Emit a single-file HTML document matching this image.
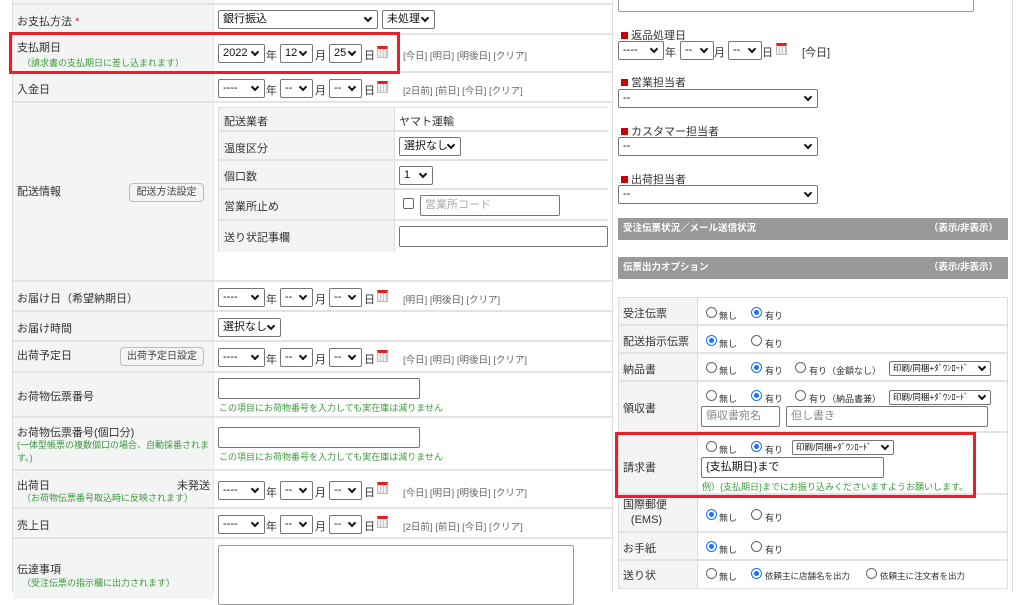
<!DOCTYPE html>
<html><head><meta charset="utf-8"><style>
*{box-sizing:border-box;margin:0;padding:0}
body{width:1024px;height:592px;overflow:hidden;background:#fff;position:relative;font-family:"Liberation Sans","Noto Sans CJK JP",sans-serif;font-size:11px;color:#333}
.a{position:absolute}
.lab{position:absolute;background:#f3f4f4;border-bottom:2px solid #e3e3e3}
.val{position:absolute;background:#fff;border-bottom:2px solid #e3e3e3}
.L{left:13px;width:200px}
.V{left:213px;width:399px}
.s{position:absolute;height:19px;border:1px solid #767676;border-radius:2px;background:#fff;font-size:11px;line-height:17px;padding-left:4px;color:#111;white-space:nowrap;overflow:hidden}
.s:after{content:"";position:absolute;right:6px;top:4px;width:4px;height:4px;border-right:2px solid #111;border-bottom:2px solid #111;transform:rotate(45deg)}
.t{position:absolute;font-size:11px;color:#333;white-space:nowrap}
.g{position:absolute;font-size:9px;color:#3c9a3c;white-space:nowrap}
.lk{position:absolute;font-size:9.5px;color:#666;white-space:nowrap}
.cal{position:absolute;width:11px;height:12px;border:1px solid #bbb;border-top:3px solid #d22;background:repeating-linear-gradient(90deg,#eee 0 2px,#ccc 2px 3px)}
.in{position:absolute;border:1px solid #767676;border-radius:2px;background:#fff;height:21px;font-size:11px;padding-left:4px;line-height:19px;color:#999;white-space:nowrap}
.btn{position:absolute;border:1px solid #bbb;border-radius:4px;background:#f4f4f4;font-size:10px;text-align:center;color:#444;line-height:17px;height:19px;white-space:nowrap;overflow:hidden}
.r{position:absolute;width:11px;height:11px;border:1px solid #666;border-radius:50%;background:#fff}
.rc{border:1px solid #1a73e8}
.rc:after{content:"";position:absolute;left:2px;top:2px;width:5px;height:5px;border-radius:50%;background:#1a73e8}
.rt{position:absolute;font-size:9px;color:#333;white-space:nowrap}
.sq{display:inline-block;width:7px;height:7px;background:#c00;margin-right:3px}
.bar{position:absolute;left:618px;width:390px;height:22px;background:#999;color:#fff;font-size:9.5px;font-weight:bold;line-height:22px;padding:0 10px 0 5px}
.bar span{float:right}
.ss{position:absolute;height:15px;border:1px solid #767676;border-radius:2px;background:#fff;font-size:8.5px;line-height:13px;padding-left:3px;color:#111;white-space:nowrap;overflow:hidden}
.ss:after{content:"";position:absolute;right:5px;top:2px;width:4px;height:4px;border-right:2px solid #111;border-bottom:2px solid #111;transform:rotate(45deg)}
</style></head><body>

<div class="a" style="left:12px;top:0;width:1px;height:592px;background:#ddd"></div>
<div class="a" style="left:612px;top:0;width:1px;height:592px;background:#ddd"></div>
<div class="a" style="left:1012px;top:0;width:1px;height:592px;background:#ddd"></div>

<div class="lab L" style="top:0;height:5px"></div><div class="val V" style="top:0;height:5px"></div>
<div class="a" style="left:213px;top:0;width:1px;height:592px;background:#e3e3e3;z-index:1"></div>

<div class="lab L" style="top:5px;height:30px"></div><div class="val V" style="top:5px;height:30px"></div>
<div class="t" style="left:17px;top:13px">お支払方法 <span style="color:#d22">*</span></div>
<div class="s" style="left:218px;top:10px;width:160px">銀行振込</div>
<div class="s" style="left:382px;top:10px;width:53px">未処理</div>

<div class="lab L" style="top:35px;height:38px"></div><div class="val V" style="top:35px;height:38px"></div>
<div class="t" style="left:17px;top:39px">支払期日</div>
<div class="g" style="left:22px;top:56px">（請求書の支払期日に差し込まれます）</div>
<div class="s" style="left:218px;top:44px;width:47px">2022</div><div class="t" style="left:266px;top:47px">年</div>
<div class="s" style="left:280px;top:44px;width:33px">12</div><div class="t" style="left:315px;top:47px">月</div>
<div class="s" style="left:329px;top:44px;width:33px">25</div><div class="t" style="left:364px;top:47px">日</div>
<div class="cal" style="left:377px;top:46px"></div>
<div class="lk" style="left:403px;top:48px">[今日] [明日] [明後日] [クリア]</div>
<div class="a" style="left:9px;top:32px;width:391px;height:42px;border:3px solid #e8202a;z-index:5"></div>

<div class="lab L" style="top:73px;height:30px"></div><div class="val V" style="top:73px;height:30px"></div>
<div class="t" style="left:17px;top:81px">入金日</div>
<div class="s" style="left:218px;top:79px;width:47px">----</div><div class="t" style="left:266px;top:82px">年</div>
<div class="s" style="left:280px;top:79px;width:33px">--</div><div class="t" style="left:315px;top:82px">月</div>
<div class="s" style="left:329px;top:79px;width:33px">--</div><div class="t" style="left:364px;top:82px">日</div>
<div class="cal" style="left:377px;top:81px"></div>
<div class="lk" style="left:403px;top:83px">[2日前] [前日] [今日] [クリア]</div>

<div class="lab L" style="top:103px;height:179px"></div><div class="val V" style="top:103px;height:179px"></div>
<div class="t" style="left:17px;top:183px">配送情報</div>
<div class="btn" style="left:129px;top:183px;width:75px">配送方法設定</div>
<div class="a" style="left:218px;top:107px;width:390px;height:145px;border:1px solid #ddd;border-right:none;background:#ddd"></div>
<div class="lab" style="left:219px;top:108px;width:175px;height:24px"></div><div class="val" style="left:395px;top:108px;width:213px;height:24px"></div>
<div class="lab" style="left:219px;top:132px;width:175px;height:29px"></div><div class="val" style="left:395px;top:132px;width:213px;height:29px"></div>
<div class="lab" style="left:219px;top:161px;width:175px;height:29px"></div><div class="val" style="left:395px;top:161px;width:213px;height:29px"></div>
<div class="lab" style="left:219px;top:190px;width:175px;height:31px"></div><div class="val" style="left:395px;top:190px;width:213px;height:31px"></div>
<div class="lab" style="left:219px;top:221px;width:175px;height:31px;border:none"></div><div class="val" style="left:395px;top:221px;width:213px;height:31px;border:none"></div>
<div class="t" style="left:224px;top:113px">配送業者</div><div class="t" style="left:399px;top:113px">ヤマト運輸</div>
<div class="t" style="left:224px;top:140px">温度区分</div><div class="s" style="left:399px;top:137px;width:62px">選択なし</div>
<div class="t" style="left:224px;top:168px">個口数</div><div class="s" style="left:399px;top:166px;width:34px">1</div>
<div class="t" style="left:224px;top:198px">営業所止め</div>
<div class="a" style="left:403px;top:198px;width:11px;height:11px;border:1px solid #666;border-radius:2px;background:#fff"></div>
<div class="in" style="left:420px;top:195px;width:140px;color:#aaa">営業所コード</div>
<div class="t" style="left:224px;top:229px">送り状記事欄</div>
<div class="in" style="left:399px;top:226px;width:209px"></div>

<div class="lab L" style="top:282px;height:30px"></div><div class="val V" style="top:282px;height:30px"></div>
<div class="t" style="left:17px;top:290px">お届け日（希望納期日）</div>
<div class="s" style="left:218px;top:288px;width:47px">----</div><div class="t" style="left:266px;top:291px">年</div>
<div class="s" style="left:280px;top:288px;width:33px">--</div><div class="t" style="left:315px;top:291px">月</div>
<div class="s" style="left:329px;top:288px;width:33px">--</div><div class="t" style="left:364px;top:291px">日</div>
<div class="cal" style="left:377px;top:290px"></div>
<div class="lk" style="left:403px;top:292px">[明日] [明後日] [クリア]</div>

<div class="lab L" style="top:312px;height:30px"></div><div class="val V" style="top:312px;height:30px"></div>
<div class="t" style="left:17px;top:320px">お届け時間</div>
<div class="s" style="left:218px;top:318px;width:63px">選択なし</div>

<div class="lab L" style="top:342px;height:31px"></div><div class="val V" style="top:342px;height:31px"></div>
<div class="t" style="left:17px;top:347px">出荷予定日</div>
<div class="btn" style="left:120px;top:347px;width:84px">出荷予定日設定</div>
<div class="s" style="left:218px;top:348px;width:47px">----</div><div class="t" style="left:266px;top:351px">年</div>
<div class="s" style="left:280px;top:348px;width:33px">--</div><div class="t" style="left:315px;top:351px">月</div>
<div class="s" style="left:329px;top:348px;width:33px">--</div><div class="t" style="left:364px;top:351px">日</div>
<div class="cal" style="left:377px;top:350px"></div>
<div class="lk" style="left:403px;top:352px">[今日] [明日] [明後日] [クリア]</div>

<div class="lab L" style="top:373px;height:45px"></div><div class="val V" style="top:373px;height:45px"></div>
<div class="t" style="left:17px;top:388px">お荷物伝票番号</div>
<div class="in" style="left:218px;top:378px;width:202px"></div>
<div class="g" style="left:219px;top:401px">この項目にお荷物番号を入力しても実在庫は減りません</div>

<div class="lab L" style="top:418px;height:53px"></div><div class="val V" style="top:418px;height:53px"></div>
<div class="t" style="left:17px;top:424px">お荷物伝票番号(個口分)</div>
<div class="g" style="left:17px;top:439px;white-space:normal;width:194px;line-height:13px">(一体型帳票の複数個口の場合、自動採番されます。)</div>
<div class="in" style="left:218px;top:427px;width:202px"></div>
<div class="g" style="left:219px;top:450px">この項目にお荷物番号を入力しても実在庫は減りません</div>

<div class="lab L" style="top:471px;height:38px"></div><div class="val V" style="top:471px;height:38px"></div>
<div class="t" style="left:17px;top:477px">出荷日</div><div class="t" style="left:177px;top:477px">未発送</div>
<div class="g" style="left:22px;top:491px">（お荷物伝票番号取込時に反映されます）</div>
<div class="s" style="left:218px;top:481px;width:47px">----</div><div class="t" style="left:266px;top:484px">年</div>
<div class="s" style="left:280px;top:481px;width:33px">--</div><div class="t" style="left:315px;top:484px">月</div>
<div class="s" style="left:329px;top:481px;width:33px">--</div><div class="t" style="left:364px;top:484px">日</div>
<div class="cal" style="left:377px;top:482px"></div>
<div class="lk" style="left:403px;top:485px">[今日] [明日] [明後日] [クリア]</div>

<div class="lab L" style="top:509px;height:30px"></div><div class="val V" style="top:509px;height:30px"></div>
<div class="t" style="left:17px;top:517px">売上日</div>
<div class="s" style="left:218px;top:515px;width:47px">----</div><div class="t" style="left:266px;top:518px">年</div>
<div class="s" style="left:280px;top:515px;width:33px">--</div><div class="t" style="left:315px;top:518px">月</div>
<div class="s" style="left:329px;top:515px;width:33px">--</div><div class="t" style="left:364px;top:518px">日</div>
<div class="cal" style="left:377px;top:516px"></div>
<div class="lk" style="left:403px;top:519px">[2日前] [前日] [今日] [クリア]</div>

<div class="lab L" style="top:539px;height:60px;border:none"></div><div class="val V" style="top:539px;height:60px;border:none"></div>
<div class="t" style="left:17px;top:561px">伝達事項</div>
<div class="g" style="left:22px;top:576px">（受注伝票の指示欄に出力されます）</div>
<div class="a" style="left:218px;top:545px;width:356px;height:60px;border:1px solid #999;border-radius:2px"></div>

<!-- right side -->
<div class="a" style="left:618px;top:-5px;width:356px;height:17px;border:1px solid #999;border-radius:2px;background:#fff"></div>
<div class="t" style="left:621px;top:27px"><span class="sq"></span>返品処理日</div>
<div class="s" style="left:618px;top:41px;width:46px">----</div><div class="t" style="left:665px;top:44px">年</div>
<div class="s" style="left:680px;top:41px;width:34px">--</div><div class="t" style="left:714px;top:44px">月</div>
<div class="s" style="left:728px;top:41px;width:34px">--</div><div class="t" style="left:762px;top:44px">日</div>
<div class="cal" style="left:776px;top:43px"></div>
<div class="t" style="left:802px;top:44px">[今日]</div>

<div class="t" style="left:621px;top:74px"><span class="sq"></span>営業担当者</div>
<div class="s" style="left:618px;top:89px;width:200px">--</div>
<div class="t" style="left:621px;top:123px"><span class="sq"></span>カスタマー担当者</div>
<div class="s" style="left:618px;top:137px;width:200px">--</div>
<div class="t" style="left:621px;top:171px"><span class="sq"></span>出荷担当者</div>
<div class="s" style="left:618px;top:185px;width:200px">--</div>

<div class="bar" style="top:218px">受注伝票状況／メール送信状況<span>（表示/非表示）</span></div>
<div class="bar" style="top:257px">伝票出力オプション<span>（表示/非表示）</span></div>

<div class="a" style="left:618px;top:297px;width:390px;height:292px;border:1px solid #ddd;background:#ddd"></div>
<div class="a" style="left:697px;top:298px;width:1px;height:290px;background:#ddd;z-index:1"></div>
<div class="lab" style="left:619px;top:298px;width:78px;height:28px"></div><div class="val" style="left:698px;top:298px;width:309px;height:28px"></div>
<div class="lab" style="left:619px;top:326px;width:78px;height:28px"></div><div class="val" style="left:698px;top:326px;width:309px;height:28px"></div>
<div class="lab" style="left:619px;top:354px;width:78px;height:28px"></div><div class="val" style="left:698px;top:354px;width:309px;height:28px"></div>
<div class="lab" style="left:619px;top:382px;width:78px;height:51px"></div><div class="val" style="left:698px;top:382px;width:309px;height:51px"></div>
<div class="lab" style="left:619px;top:433px;width:78px;height:62px"></div><div class="val" style="left:698px;top:433px;width:309px;height:62px"></div>
<div class="lab" style="left:619px;top:495px;width:78px;height:38px"></div><div class="val" style="left:698px;top:495px;width:309px;height:38px"></div>
<div class="lab" style="left:619px;top:533px;width:78px;height:28px"></div><div class="val" style="left:698px;top:533px;width:309px;height:28px"></div>
<div class="lab" style="left:619px;top:561px;width:78px;height:27px;border:none"></div><div class="val" style="left:698px;top:561px;width:309px;height:27px;border:none"></div>

<div class="t" style="left:623px;top:305px">受注伝票</div>
<div class="r" style="left:706px;top:307px"></div><div class="rt" style="left:719px;top:309px">無し</div>
<div class="r rc" style="left:751px;top:307px"></div><div class="rt" style="left:765px;top:309px">有り</div>

<div class="t" style="left:623px;top:333px">配送指示伝票</div>
<div class="r rc" style="left:706px;top:335px"></div><div class="rt" style="left:719px;top:337px">無し</div>
<div class="r" style="left:751px;top:335px"></div><div class="rt" style="left:765px;top:337px">有り</div>

<div class="t" style="left:623px;top:361px">納品書</div>
<div class="r" style="left:706px;top:362px"></div><div class="rt" style="left:719px;top:364px">無し</div>
<div class="r rc" style="left:751px;top:362px"></div><div class="rt" style="left:765px;top:364px">有り</div>
<div class="r" style="left:795px;top:362px"></div><div class="rt" style="left:809px;top:364px">有り（金額なし）</div>
<div class="ss" style="left:889px;top:361px;width:102px">印刷/同梱+ﾀﾞｳﾝﾛｰﾄﾞ</div>

<div class="t" style="left:623px;top:400px">領収書</div>
<div class="r" style="left:706px;top:390px"></div><div class="rt" style="left:719px;top:392px">無し</div>
<div class="r rc" style="left:751px;top:390px"></div><div class="rt" style="left:765px;top:392px">有り</div>
<div class="r" style="left:795px;top:390px"></div><div class="rt" style="left:809px;top:392px">有り（納品書兼）</div>
<div class="ss" style="left:889px;top:390px;width:102px">印刷/同梱+ﾀﾞｳﾝﾛｰﾄﾞ</div>
<div class="in" style="left:701px;top:406px;width:79px;color:#888">領収書宛名</div>
<div class="in" style="left:786px;top:406px;width:202px;color:#888">但し書き</div>

<div class="t" style="left:623px;top:459px">請求書</div>
<div class="r" style="left:706px;top:441px"></div><div class="rt" style="left:719px;top:443px">無し</div>
<div class="r rc" style="left:751px;top:441px"></div><div class="rt" style="left:765px;top:443px">有り</div>
<div class="ss" style="left:792px;top:440px;width:102px">印刷/同梱+ﾀﾞｳﾝﾛｰﾄﾞ</div>
<div class="in" style="left:701px;top:457px;width:183px;color:#111">{支払期日}まで</div>
<div class="g" style="left:702px;top:480px">例）{支払期日}までにお振り込みくださいますようお願いします。</div>
<div class="a" style="left:615px;top:432px;width:361px;height:66px;border:3px solid #e8202a;z-index:5"></div>

<div class="t" style="left:623px;top:498px;text-align:center;line-height:15px">国際郵便<br>&nbsp;(EMS)</div>
<div class="r rc" style="left:706px;top:509px"></div><div class="rt" style="left:719px;top:511px">無し</div>
<div class="r" style="left:751px;top:509px"></div><div class="rt" style="left:765px;top:511px">有り</div>

<div class="t" style="left:623px;top:540px">お手紙</div>
<div class="r rc" style="left:706px;top:541px"></div><div class="rt" style="left:719px;top:543px">無し</div>
<div class="r" style="left:751px;top:541px"></div><div class="rt" style="left:765px;top:543px">有り</div>

<div class="t" style="left:623px;top:567px">送り状</div>
<div class="r" style="left:706px;top:568px"></div><div class="rt" style="left:719px;top:570px">無し</div>
<div class="r rc" style="left:751px;top:568px"></div><div class="rt" style="left:765px;top:570px;font-size:8.5px">依頼主に店舗名を出力</div>
<div class="r" style="left:866px;top:568px"></div><div class="rt" style="left:880px;top:570px;font-size:8.5px">依頼主に注文者を出力</div>
</body></html>
